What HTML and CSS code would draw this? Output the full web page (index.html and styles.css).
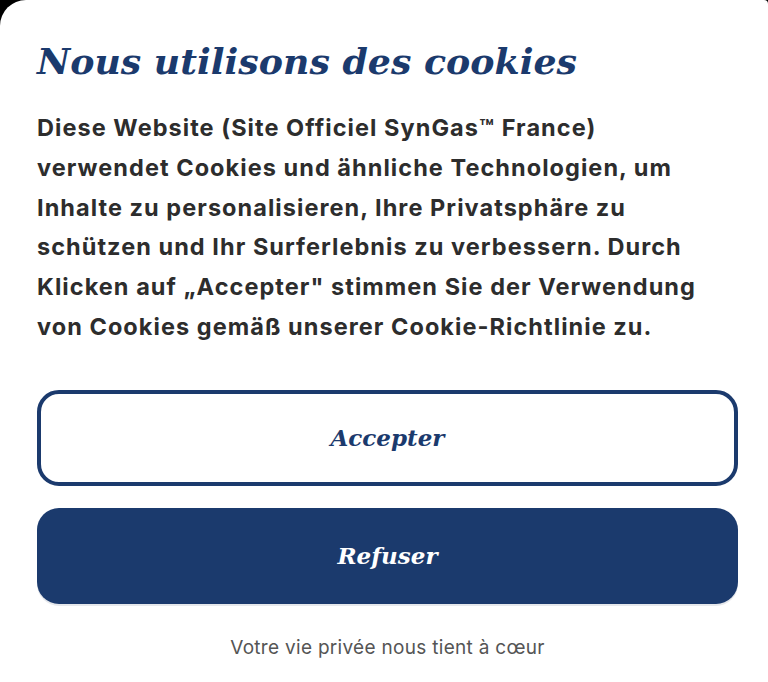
FILE: index.html
```html
<!DOCTYPE html>
<html lang="fr">
<head>
<meta charset="utf-8">
<title>Cookies</title>
<link rel="stylesheet" href="styles.css">
</head>
<body>
<div class="sheet">
  <h1 class="title">Nous utilisons des cookies</h1>
  <p class="text">Diese Website (Site Officiel SynGas™ France)<br>verwendet Cookies und ähnliche Technologien, um<br>Inhalte zu personalisieren, Ihre Privatsphäre zu<br>schützen und Ihr Surferlebnis zu verbessern. Durch<br>Klicken auf „Accepter" stimmen Sie der Verwendung<br>von Cookies gemäß unserer Cookie-Richtlinie zu.</p>
  <div class="actions">
    <button class="btn btn-outline">Accepter</button>
    <button class="btn btn-solid">Refuser</button>
  </div>
  <p class="footer">Votre vie privée nous tient à cœur</p>
</div>
</body>
</html>
```
FILE: styles.css
```css
html, body {
  margin: 0;
  padding: 0;
  background: #000;
  height: 682px;
  overflow: hidden;
}
.sheet {
  background: #fff;
  height: 682px;
  box-sizing: border-box;
  padding: 36px 30px 0 37px;
  border-top-left-radius: 26px;
  border-top-right-radius: 4px;
  display: flex;
  flex-direction: column;
}
.title {
  margin: 0;
  font-family: "DejaVu Serif", Georgia, serif;
  font-style: italic;
  font-weight: 700;
  font-size: 36.3px;
  line-height: 52px;
  color: #1b3a6d;
}
.text {
  margin: 20px 0 0 0;
  font-family: Inter, "Liberation Sans", sans-serif;
  font-weight: 700;
  font-size: 23.5px;
  line-height: 39.8px;
  letter-spacing: 1.05px;
  color: #2d2d2d;
}
.actions {
  margin-top: 43px;
  display: flex;
  flex-direction: column;
  gap: 22px;
}
.btn {
  font-family: "DejaVu Serif", Georgia, serif;
  font-style: italic;
  font-weight: 700;
  font-size: 23px;
  height: 96px;
  border-radius: 22px;
  width: 100%;
  box-sizing: border-box;
  cursor: pointer;
}
.btn-outline {
  background: #fff;
  color: #1b3a6d;
  border: 4px solid #1b3a6d;
}
.btn-solid {
  background: #1b3a6d;
  color: #fff;
  border: none;
  box-shadow: 0 2px 0 #e6e8ec;
}
.footer {
  margin: 32px 0 0 0;
  text-align: center;
  font-family: Inter, "Liberation Sans", sans-serif;
  font-size: 19px;
  letter-spacing: 0.3px;
  color: #555;
}
```
